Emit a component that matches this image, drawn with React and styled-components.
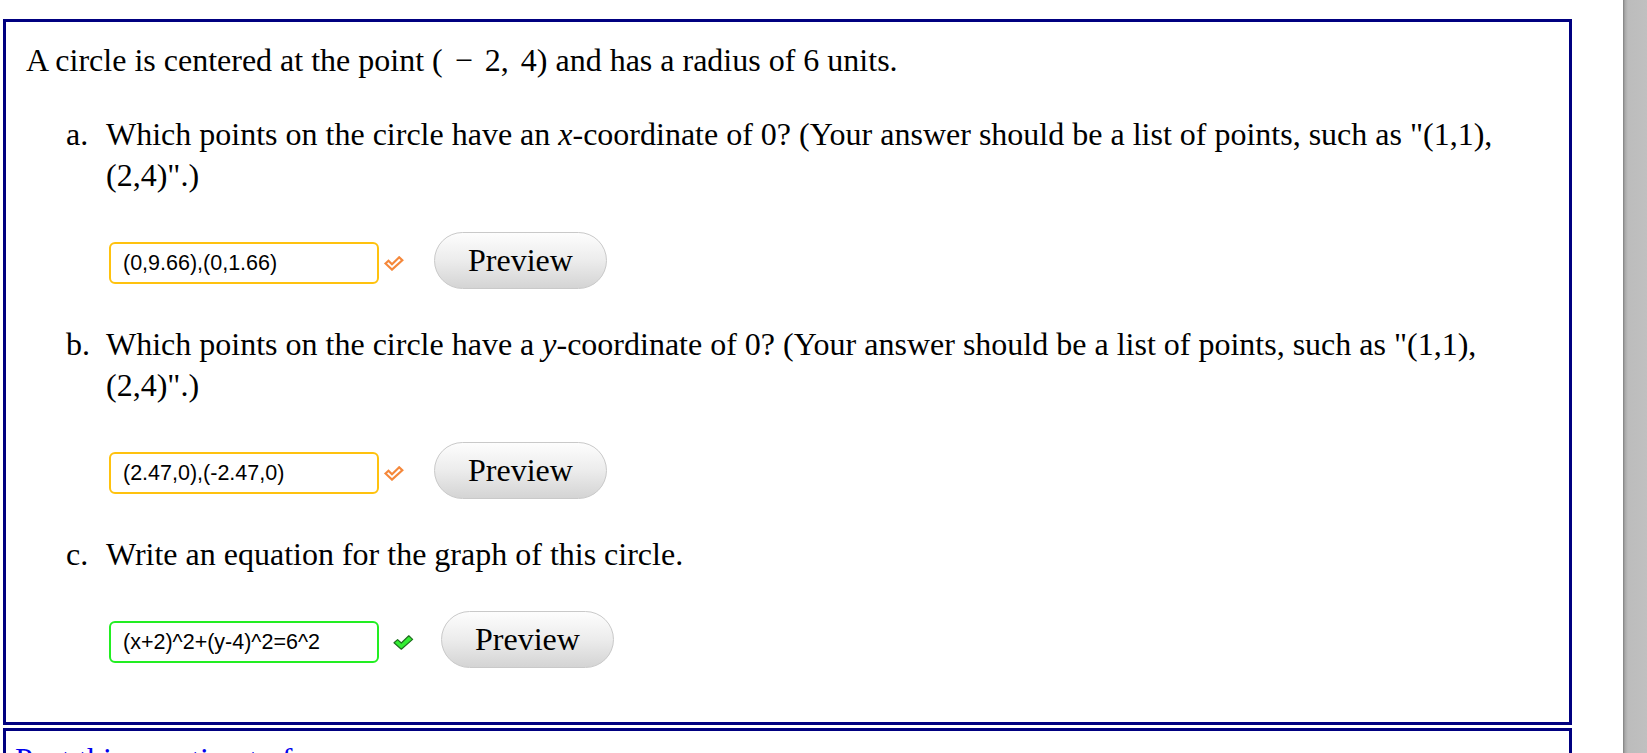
import React from "react";
import styled, { createGlobalStyle } from "styled-components";

const GlobalStyle = createGlobalStyle`
  html, body {
    margin: 0;
    padding: 0;
    background: #ffffff;
  }
  body {
    font-family: "Liberation Serif", "Times New Roman", serif;
    color: #000000;
  }
`;

const Page = styled.div`
  display: flex;
  height: 753px;
  overflow: hidden;
`;

const Content = styled.div`
  flex: 1;
  padding: 19px 51px 0 3px;
  display: flex;
  flex-direction: column;
  gap: 3px;
`;

const Scrollbar = styled.div`
  width: 24px;
  flex-shrink: 0;
  background: linear-gradient(to right, #7f7f7f 0, #a9a9a9 2px, #bcbcbc 5px, #c0c0c0 100%);
`;

const ProblemBox = styled.div`
  border: 3px solid #000080;
  padding: 18px 20px 19px 20px;
  font-size: 32px;
  line-height: 41px;
`;

const ForumBox = styled.div`
  flex-shrink: 0;
  border: 3px solid #000080;
  padding: 8px 9px;
  font-size: 32px;
  line-height: 41px;
`;

const ForumLink = styled.a`
  color: #0000ee;
  text-decoration: none;
`;

const Intro = styled.p`
  margin: 0;
`;

const Math = styled.span`
  font-family: "Liberation Serif", "Times New Roman", serif;
  word-spacing: 4px;
`;

const MathVar = styled.i`
  font-family: "Liberation Serif", serif;
  font-style: italic;
`;

const List = styled.ol`
  list-style: none;
  margin: 33px 0 0 0;
  padding: 0 0 0 40px;
`;

const Item = styled.li`
  display: grid;
  grid-template-columns: 40px 1fr;
`;

const Label = styled.span``;

const Body = styled.div`
  min-width: 0;
`;

const Question = styled.div``;

const AnswerRow = styled.div`
  display: flex;
  align-items: center;
  margin: 36px 0 35px 3px;
`;

const Answer = styled.input`
  box-sizing: border-box;
  width: 270px;
  height: 42px;
  margin-top: 5px;
  padding: 0 12px;
  border: 2px solid ${(p) => (p.$status === "correct" ? "#22ee22" : "#ffc20e")};
  border-radius: 6px;
  font-family: "Liberation Sans", Arial, sans-serif;
  font-size: 21.5px;
  color: #000;
  background: #fff;
  outline: none;
`;

const Mark = styled.span`
  display: inline-flex;
  margin-left: ${(p) => (p.$status === "correct" ? "14px" : "5px")};
  margin-right: ${(p) => (p.$status === "correct" ? "27px" : "30px")};
  margin-top: 6px;
`;

const PreviewButton = styled.button`
  box-sizing: border-box;
  width: 173px;
  height: 57px;
  border: 1.5px solid #c9c9c9;
  border-radius: 29px;
  background: linear-gradient(to bottom, #fdfdfd 0%, #ececec 50%, #d4d4d4 100%);
  font-family: "Liberation Serif", "Times New Roman", serif;
  font-size: 32px;
  color: #000;
  padding: 0;
`;

const PartialCheck = () => (
  <svg width="20" height="15" viewBox="0 0 20 15">
    <path
      d="M1.5 7.5 L4.5 4.8 L8 8.2 L15.2 1.3 L18.3 4.2 L8 13.6 Z"
      fill="#ffffff"
      stroke="#f5883b"
      strokeWidth="2.2"
      strokeLinejoin="miter"
    />
  </svg>
);

const CorrectCheck = () => (
  <svg width="21" height="15" viewBox="0 0 21 15">
    <path
      d="M1 7.8 L4.6 4.6 L8.3 8 L15.8 0.8 L19.6 4.4 L8.3 14.2 Z"
      fill="#33ee33"
      stroke="#1f6e1f"
      strokeWidth="1.2"
      strokeLinejoin="round"
    />
  </svg>
);

const parts = [
  {
    label: "a.",
    question: (
      <>
        Which points on the circle have an <MathVar>x</MathVar>-coordinate of 0? (Your answer should be a
        list of points, such as "(1,1), (2,4)".)
      </>
    ),
    answer: "(0,9.66),(0,1.66)",
    status: "partial",
  },
  {
    label: "b.",
    question: (
      <>
        Which points on the circle have a <MathVar>y</MathVar>-coordinate of 0? (Your answer should be a
        list of points, such as "(1,1), (2,4)".)
      </>
    ),
    answer: "(2.47,0),(-2.47,0)",
    status: "partial",
  },
  {
    label: "c.",
    question: <>Write an equation for the graph of this circle.</>,
    answer: "(x+2)^2+(y-4)^2=6^2",
    status: "correct",
  },
];

const App = () => {
  return (
    <>
      <GlobalStyle />
      <Page>
        <Content>
          <ProblemBox>
            <Intro>
              A circle is centered at the point <Math>( − 2, 4)</Math> and has a radius of 6 units.
            </Intro>
            <List>
              {parts.map((part) => (
                <Item key={part.label}>
                  <Label>{part.label}</Label>
                  <Body>
                    <Question>{part.question}</Question>
                    <AnswerRow>
                      <Answer $status={part.status} defaultValue={part.answer} />
                      <Mark $status={part.status}>
                        {part.status === "correct" ? <CorrectCheck /> : <PartialCheck />}
                      </Mark>
                      <PreviewButton>Preview</PreviewButton>
                    </AnswerRow>
                  </Body>
                </Item>
              ))}
            </List>
          </ProblemBox>
          <ForumBox>
            <ForumLink href="#">Post this question to forum</ForumLink>
          </ForumBox>
        </Content>
        <Scrollbar />
      </Page>
    </>
  );
};

export default App;
